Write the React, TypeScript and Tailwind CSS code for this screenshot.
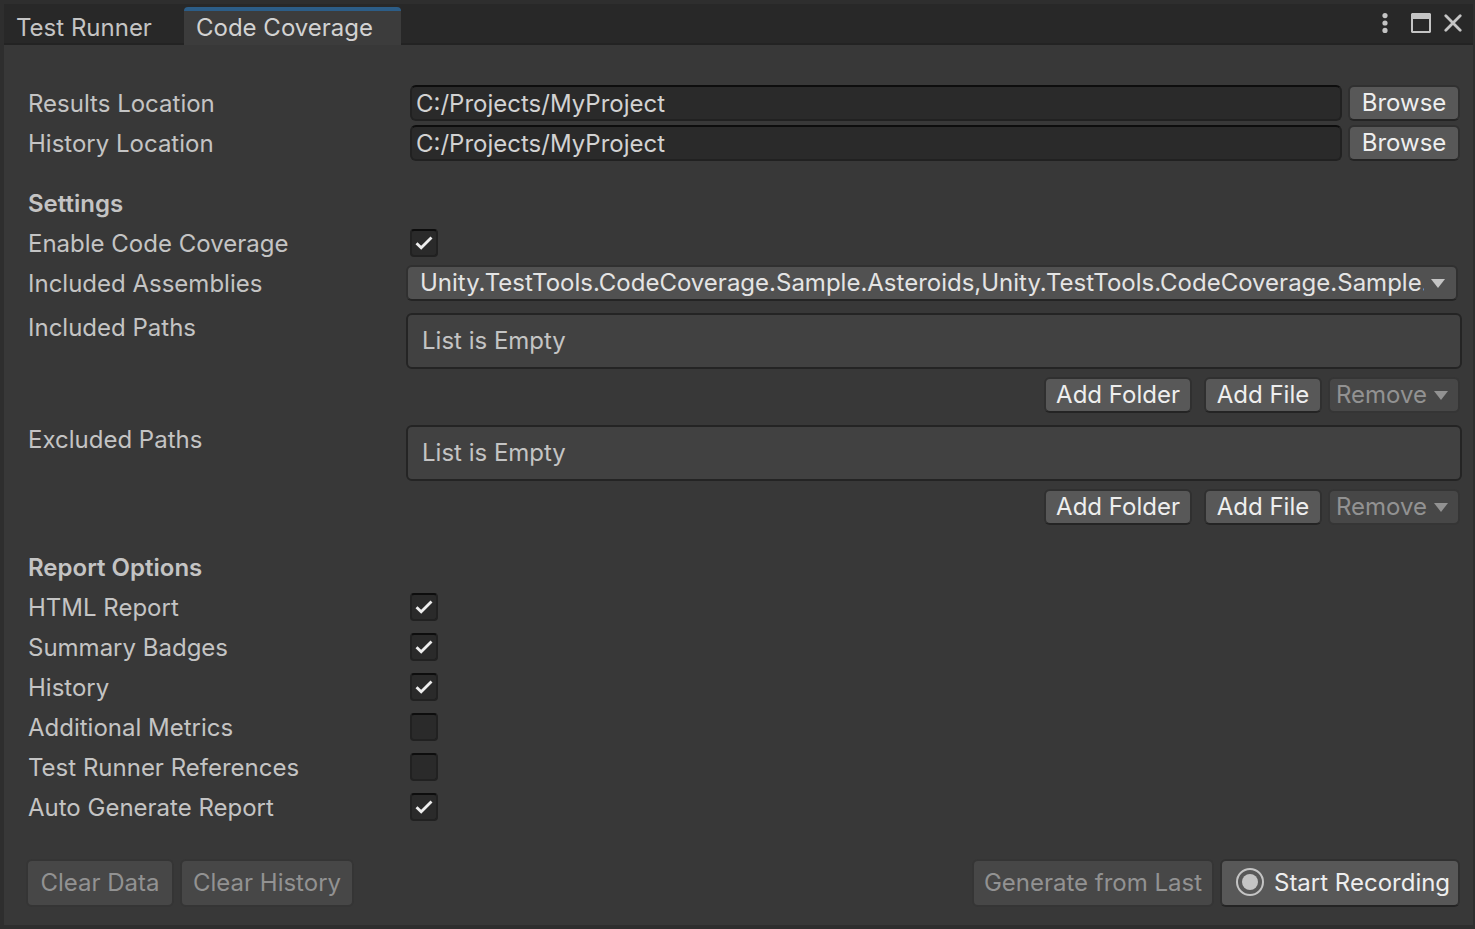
import { useState, type ButtonHTMLAttributes, type ReactNode } from 'react';

const ASSEMBLIES =
  'Unity.TestTools.CodeCoverage.Sample.Asteroids,Unity.TestTools.CodeCoverage.Sample.Asteroids.Tests';

function Caret() {
  return (
    <svg viewBox="0 0 14 9" className="h-[9px] w-[14px] shrink-0" fill="currentColor" aria-hidden="true">
      <path d="M0 0h14L7 9z" />
    </svg>
  );
}

function Button({ className = '', ...props }: ButtonHTMLAttributes<HTMLButtonElement>) {
  return (
    <button
      type="button"
      className={`flex shrink-0 items-center whitespace-nowrap rounded-md border-2 border-[#303030] border-b-[#242424] bg-[#585858] text-[#eeeeee] disabled:border-[#353535] disabled:bg-[#474747] disabled:text-[#929292] ${className}`}
      {...props}
    />
  );
}

function Row({ id, label, children }: { id: string; label: string; children: ReactNode }) {
  return (
    <div className="flex h-10 items-center">
      <label htmlFor={id} className="w-[378px] shrink-0 pt-[2px]">
        {label}
      </label>
      {children}
    </div>
  );
}

function PathField({ id, label }: { id: string; label: string }) {
  return (
    <Row id={id} label={label}>
      <div className="ml-1 mr-[2px] flex min-w-0 flex-1 gap-[6px]">
        <input
          id={id}
          type="text"
          defaultValue="C:/Projects/MyProject"
          className="h-9 min-w-0 flex-1 rounded-md border-2 border-[#212121] border-t-[#0d0d0d] bg-[#2a2a2a] px-1 text-[#d2d2d2] outline-none"
        />
        <Button className="h-9 w-28 justify-center">Browse</Button>
      </div>
    </Row>
  );
}

function CheckRow({ id, label, on = false }: { id: string; label: string; on?: boolean }) {
  const [checked, setChecked] = useState(on);
  return (
    <Row id={id} label={label}>
      <span className="ml-1 grid h-7 w-7 place-items-center">
        <input
          id={id}
          type="checkbox"
          checked={checked}
          onChange={(e) => setChecked(e.target.checked)}
          className="col-start-1 row-start-1 h-7 w-7 appearance-none rounded border-2 border-[#212121] border-t-[#0d0d0d] bg-[#2a2a2a]"
        />
        {checked && (
          <svg
            viewBox="0 0 28 28"
            className="pointer-events-none col-start-1 row-start-1 h-7 w-7"
            fill="none"
            stroke="#eeeeee"
            strokeWidth="2.8"
            aria-hidden="true"
          >
            <path d="M6.5 14.2l4.7 4.6L21.5 8.5" />
          </svg>
        )}
      </span>
    </Row>
  );
}

function PathList({ label }: { label: string }) {
  return (
    <section aria-label={label} className="flex">
      <h3 className="w-[378px] shrink-0 pt-px">{label}</h3>
      <div className="min-w-0 flex-1">
        <div className="flex h-14 items-center rounded-md border-2 border-[#242424] bg-[#414141] px-[14px]">
          List is Empty
        </div>
        <div className="mr-[2px] mt-2 flex justify-end">
          <Button className="mr-3 h-9 w-[148px] justify-center">Add Folder</Button>
          <Button className="mr-[6px] h-9 w-[118px] justify-center">Add File</Button>
          <Button disabled className="h-9 w-[132px] justify-between pl-[6px] pr-[10px]">
            Remove
            <Caret />
          </Button>
        </div>
      </div>
    </section>
  );
}

export default function App() {
  return (
    <div className="flex min-h-screen flex-col border-x-4 border-y-4 border-r-2 border-[#2e2e2e] bg-[#383838] font-['Inter',sans-serif] text-2xl leading-7 text-[#c4c4c4]">
      <header className="flex h-[41px] items-end justify-between border-b-2 border-[#232323] bg-[#282828]">
        <div role="tablist" className="-mb-[2px] flex h-[38px]">
          <button type="button" role="tab" aria-selected="false" className="w-[180px] pl-3 pt-1 text-left">
            Test Runner
          </button>
          <button
            type="button"
            role="tab"
            aria-selected="true"
            className="w-[217px] rounded-t border-t-4 border-[#2c5d87] bg-[#3c3c3c] pl-3 text-left text-[#d2d2d2]"
          >
            Code Coverage
          </button>
        </div>
        <div className="mr-[11px] flex h-full items-center pb-[2px]">
          <button type="button" aria-label="More options" className="mr-[23px]">
            <svg viewBox="0 0 6 20" className="h-5 w-[6px]" fill="#c4c4c4">
              <circle cx="3" cy="2.6" r="2.6" />
              <circle cx="3" cy="10" r="2.6" />
              <circle cx="3" cy="17.4" r="2.6" />
            </svg>
          </button>
          <button type="button" aria-label="Maximize" className="mr-[13px]">
            <svg viewBox="0 0 20 20" className="h-5 w-5" fill="#c4c4c4">
              <path fillRule="evenodd" d="M1 0h18l1 1v18l-1 1H1l-1-1V1zM2 6v12h16V6z" />
            </svg>
          </button>
          <button type="button" aria-label="Close">
            <svg viewBox="0 0 18 18" className="h-[18px] w-[18px]" stroke="#c4c4c4" strokeWidth="2.8" strokeLinecap="round">
              <path d="M1.8 1.8l14.4 14.4M16.2 1.8L1.8 16.2" />
            </svg>
          </button>
        </div>
      </header>

      <main className="flex flex-1 flex-col pb-[18px] pl-6 pr-[11px] pt-[38px]">
        <PathField id="results" label="Results Location" />
        <PathField id="history-location" label="History Location" />

        <h2 className="mt-5 flex h-10 items-center pt-[2px] font-semibold">Settings</h2>
        <CheckRow id="enable" label="Enable Code Coverage" on />
        <Row id="assemblies" label="Included Assemblies">
          <div className="mr-1 grid min-w-0 flex-1 items-center">
            <select
              id="assemblies"
              className="col-start-1 row-start-1 h-9 w-full min-w-0 appearance-none rounded-md border-2 border-[#303030] border-b-[#242424] bg-[#515151] pl-3 pr-8 text-[#e4e4e4]"
            >
              <option>{ASSEMBLIES}</option>
            </select>
            <span className="pointer-events-none col-start-1 row-start-1 mr-[13px] justify-self-end">
              <Caret />
            </span>
          </div>
        </Row>

        <div className="mt-[10px] flex flex-col gap-3">
          <PathList label="Included Paths" />
          <PathList label="Excluded Paths" />
        </div>

        <h2 className="mt-[22px] flex h-10 items-center pt-[2px] font-semibold">Report Options</h2>
        <CheckRow id="html" label="HTML Report" on />
        <CheckRow id="badges" label="Summary Badges" on />
        <CheckRow id="history" label="History" on />
        <CheckRow id="metrics" label="Additional Metrics" />
        <CheckRow id="references" label="Test Runner References" />
        <CheckRow id="auto" label="Auto Generate Report" on />

        <footer className="-ml-[2px] mr-[2px] mt-auto flex gap-[6px]">
          <Button disabled className="h-12 w-[148px] justify-center">Clear Data</Button>
          <Button disabled className="h-12 w-[174px] justify-center">Clear History</Button>
          <Button disabled className="ml-auto h-12 w-[242px] justify-center">Generate from Last</Button>
          <Button className="h-12 w-[240px] gap-[10px] pl-[14px]">
            <svg viewBox="0 0 28 28" className="mb-[2px] h-7 w-7 shrink-0" aria-hidden="true">
              <circle cx="14" cy="14" r="13" fill="none" stroke="#c4c4c4" strokeWidth="2" />
              <circle cx="14" cy="14" r="8" fill="#c4c4c4" />
            </svg>
            Start Recording
          </Button>
        </footer>
      </main>
    </div>
  );
}
